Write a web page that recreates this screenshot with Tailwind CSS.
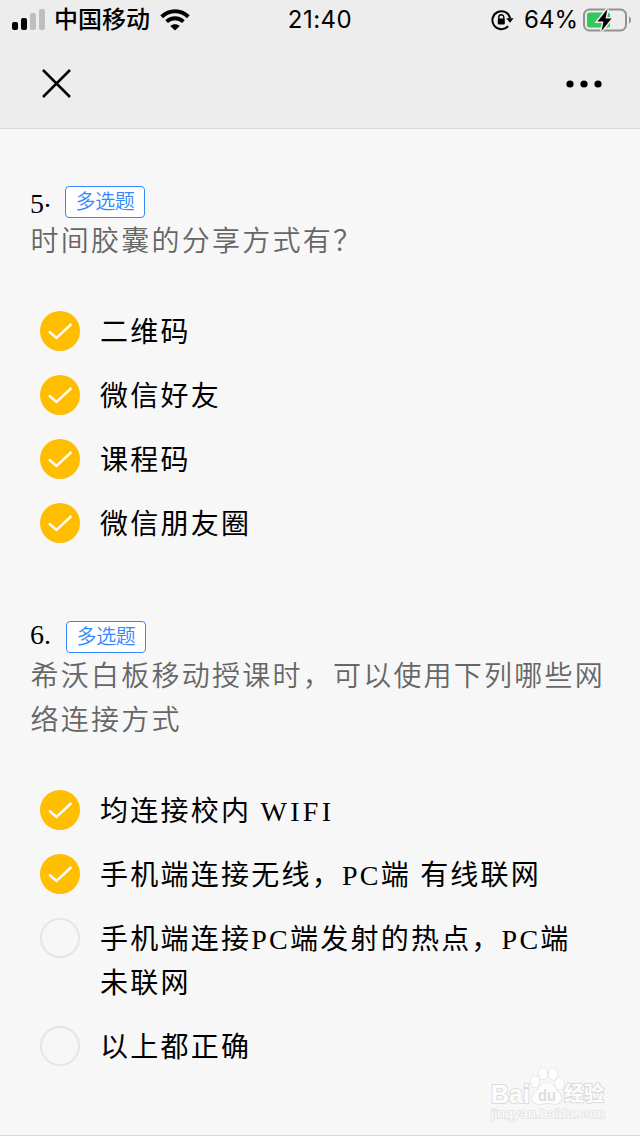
<!DOCTYPE html>
<html lang="zh-CN">
  <head>
    <meta charset="UTF-8" />
    <meta name="viewport" content="width=device-width, initial-scale=1.0" />
    <title>多选题</title>
    <script src="https://cdn.jsdelivr.net/npm/@tailwindcss/browser@4"></script>
  </head>
  <body class="relative h-[1136px] w-[640px] overflow-hidden border-b border-[#d9d9d9] bg-[#f7f7f7] font-['Liberation_Serif','Noto_Sans_CJK_SC',serif] text-black">
    <header class="h-[129px] border-b border-[#dadada] bg-[#ededed]">
      <!-- status bar -->
      <div class="grid h-10 grid-cols-3 items-center font-['Inter','Noto_Sans_CJK_SC',sans-serif] text-2xl font-medium">
        <div class="flex items-center pl-3">
          <svg class="mr-[9px] h-[22px] w-[33px]" viewBox="0 0 33 22">
            <rect x="0" y="13" width="6" height="8" rx="2" />
            <rect x="9" y="9" width="6" height="12" rx="2" />
            <rect x="18" y="4" width="6" height="17" rx="2" fill="#bebebe" />
            <rect x="27" y="0" width="6" height="21" rx="2" fill="#bebebe" />
          </svg>
          <span class="whitespace-nowrap leading-10">中国移动</span>
          <svg class="ml-[10px] h-[22px] w-[30px] shrink-0" viewBox="0 0 30 22" fill="none" stroke="#000">
            <path d="M1.700 7.700C9.200 .4 20.800 .4 28.300 7.700" stroke-width="4" />
            <path d="M6.600 12.600C11.300 8.100 18.700 8.100 23.400 12.600" stroke-width="3.800" />
            <path d="M10.300 16.900C12.900 14.600 17.100 14.600 19.700 16.900L15 21.500Z" fill="#000" stroke="none" />
          </svg>
        </div>
        <span class="text-center font-normal tracking-[0.5px]">21:40</span>
        <div class="flex items-center justify-end pr-[9px]">
          <svg class="mr-[10px] h-[22px] w-[23px]" viewBox="0 0 23 22" fill="none" stroke="#000" stroke-width="2">
            <path d="M19.200 9.300A9 9 0 1 0 17.100 17.200" />
            <path d="M15.200 9.200H22.600L19 13.700Z" fill="#000" stroke="none" />
            <path d="M7.800 10V8.300a2.500 2.500 0 0 1 5 0V10" stroke-width="1.400" />
            <rect x="6.800" y="9.600" width="7" height="6" rx="1" fill="#000" stroke="none" />
          </svg>
          <span class="font-normal">64%</span>
          <svg class="ml-[5px] h-6 w-12 shrink-0" viewBox="0 0 48 24">
            <rect x="1" y="1.500" width="42" height="21" rx="5.500" fill="none" stroke="#929292" stroke-width="2" />
            <path d="M46 8.500c2.700 1.200 2.700 6 0 7.200Z" fill="#929292" />
            <rect x="4" y="4.500" width="23" height="15" rx="2.500" fill="#34c759" />
            <path d="M24.500 1 14.500 13.500H20.500L18.500 23 28.500 10.500H22.500Z" fill="#000" stroke="#ededed" stroke-width="3" paint-order="stroke" />
          </svg>
        </div>
      </div>
      <!-- nav bar -->
      <div class="flex h-[88px] items-center justify-between pl-[42px] pr-[38px]">
        <svg class="mb-px h-[29px] w-[29px]" viewBox="0 0 29 29" stroke="#000" stroke-width="2.500">
          <path d="M1 1 28 28M28 1 1 28" />
        </svg>
        <svg class="h-2 w-9" viewBox="0 0 36 8">
          <circle cx="4" cy="4" r="3.600" />
          <circle cx="18" cy="4" r="3.600" />
          <circle cx="32" cy="4" r="3.600" />
        </svg>
      </div>
    </header>

    <main class="flex flex-col gap-[76px] pt-[57px] text-[28px] leading-[44px] tracking-[2.24px]">
      <section>
        <div class="flex h-8 items-center pl-[30px]">
          <span class="w-[35px] pt-1 tracking-normal">5<span class="relative -top-1.5">.</span></span>
          <span class="h-8 w-20 rounded border border-[#3388ff] bg-white text-center text-[20px] font-[350] leading-[31px] tracking-[-0.3px] text-[#3388ff]">多选题</span>
        </div>
        <p class="-mb-0.5 pt-0.5 pl-[30.500px] font-[350] text-[#666]">时间胶囊的分享方式有？</p>
        <ul class="mt-[47px] flex flex-col gap-5 pl-10">
          <li class="flex gap-5">
            <svg class="mt-0.5 size-10 shrink-0" viewBox="0 0 40 40"><circle cx="20" cy="20" r="20" fill="#ffbe00" /><path d="M9 20.500 16.500 27 31.500 13" fill="none" stroke="#fff" stroke-width="2.400" /></svg>
            <span class="-mb-0.5 pt-0.5">二维码</span>
          </li>
          <li class="flex gap-5">
            <svg class="mt-0.5 size-10 shrink-0" viewBox="0 0 40 40"><circle cx="20" cy="20" r="20" fill="#ffbe00" /><path d="M9 20.500 16.500 27 31.500 13" fill="none" stroke="#fff" stroke-width="2.400" /></svg>
            <span class="-mb-0.5 pt-0.5">微信好友</span>
          </li>
          <li class="flex gap-5">
            <svg class="mt-0.5 size-10 shrink-0" viewBox="0 0 40 40"><circle cx="20" cy="20" r="20" fill="#ffbe00" /><path d="M9 20.500 16.500 27 31.500 13" fill="none" stroke="#fff" stroke-width="2.400" /></svg>
            <span class="-mb-0.5 pt-0.5">课程码</span>
          </li>
          <li class="flex gap-5">
            <svg class="mt-0.5 size-10 shrink-0" viewBox="0 0 40 40"><circle cx="20" cy="20" r="20" fill="#ffbe00" /><path d="M9 20.500 16.500 27 31.500 13" fill="none" stroke="#fff" stroke-width="2.400" /></svg>
            <span class="-mb-0.5 pt-0.5">微信朋友圈</span>
          </li>
        </ul>
      </section>

      <section>
        <div class="flex h-8 items-center pl-[30px]">
          <span class="w-9 pb-1 tracking-normal">6.</span>
          <span class="h-8 w-20 rounded border border-[#3388ff] bg-white text-center text-[20px] font-[350] leading-[31px] tracking-[-0.3px] text-[#3388ff]">多选题</span>
        </div>
        <p class="-mb-0.5 pt-0.5 pl-[30.500px] font-[350] text-[#666]">希沃白板移动授课时，可以使用下列哪些网<br />络连接方式</p>
        <ul class="mt-[47px] flex flex-col gap-5 pl-10">
          <li class="flex gap-5">
            <svg class="mt-0.5 size-10 shrink-0" viewBox="0 0 40 40"><circle cx="20" cy="20" r="20" fill="#ffbe00" /><path d="M9 20.500 16.500 27 31.500 13" fill="none" stroke="#fff" stroke-width="2.400" /></svg>
            <span class="-mb-0.5 pt-0.5">均连接校内 <span class="tracking-[3.300px]">WIFI</span></span>
          </li>
          <li class="flex gap-5">
            <svg class="mt-0.5 size-10 shrink-0" viewBox="0 0 40 40"><circle cx="20" cy="20" r="20" fill="#ffbe00" /><path d="M9 20.500 16.500 27 31.500 13" fill="none" stroke="#fff" stroke-width="2.400" /></svg>
            <span class="-mb-0.5 pt-0.5">手机端连接无线，PC端 有线联网</span>
          </li>
          <li class="flex gap-5">
            <span class="mt-0.5 size-10 shrink-0 rounded-full border-2 border-[#e5e5e5]"></span>
            <span class="-mb-0.5 pt-0.5">手机端连接PC端发射的热点，PC端<br />未联网</span>
          </li>
          <li class="flex gap-5">
            <span class="mt-0.5 size-10 shrink-0 rounded-full border-2 border-[#e5e5e5]"></span>
            <span class="-mb-0.5 pt-0.5">以上都正确</span>
          </li>
        </ul>
      </section>
    </main>

    <!-- watermark -->
    <svg class="absolute left-[488px] top-[1064px] h-[62px] w-[120px]" viewBox="0 0 120 62" fill="#fdfdfd" stroke="#dcdcdc" stroke-width="1.200">
      <g class="font-['Liberation_Sans','Noto_Sans_CJK_SC',sans-serif] font-bold" paint-order="stroke">
        <text x="3" y="39" font-size="26" textLength="39" lengthAdjust="spacingAndGlyphs" stroke-width="2">Bai</text>
        <ellipse cx="47" cy="17.500" rx="4.500" ry="6" />
        <ellipse cx="55" cy="9.500" rx="4.500" ry="6" />
        <ellipse cx="65" cy="10" rx="4.500" ry="6" />
        <ellipse cx="71.500" cy="20" rx="4.500" ry="6" />
        <path d="M59 19C52 19 51 25 47 28C42 32 44 40 51 40C55 40 57 39 59 39C62 39 64 40 67 40C74 40 75 33 71 29C67 25 66 19 59 19Z" />
        <text x="50" y="37" font-size="17" textLength="18" lengthAdjust="spacingAndGlyphs" fill="#dedede" stroke="none">du</text>
        <text x="76" y="37" font-size="20" textLength="40" stroke-width="2">经验</text>
      </g>
      <text class="font-['Liberation_Sans',sans-serif]" x="3" y="54" font-size="13" textLength="114" lengthAdjust="spacingAndGlyphs" paint-order="stroke" stroke="#e2e2e2" stroke-width="1.500">jingyan.baidu.com</text>
    </svg>
  </body>
</html>
